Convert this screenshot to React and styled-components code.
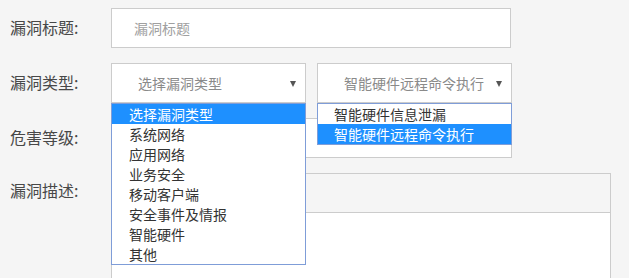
import React from 'react'
import styled, { createGlobalStyle } from 'styled-components'

const GlobalStyle = createGlobalStyle`
  body {
    margin: 0;
    background: #f5f5f5;
    font-family: "Noto Sans CJK SC", "Liberation Sans", sans-serif;
  }
`

const Form = styled.div`
  padding: 8px 0 0 10px;
`
const Row = styled.div`
  display: flex;
  align-items: flex-start;
  margin-bottom: 15px;
`
const Label = styled.div`
  width: 101px;
  flex-shrink: 0;
  line-height: ${p => p.$lh || 38}px;
  font-size: 16px;
  color: #484848;
`
const TextInput = styled.div`
  width: 400px;
  height: 40px;
  box-sizing: border-box;
  border: 1px solid #ccc;
  background: #fff;
  padding-left: 22px;
  line-height: 38px;
  font-size: 14px;
  color: #a0a0a0;
`
const SelectGroup = styled.div`
  display: flex;
  gap: 11px;
`
const Select = styled.div`
  position: relative;
  width: ${p => p.$w}px;
  height: 40px;
  box-sizing: border-box;
  border: 1px solid #ccc;
  background: #fff;
  padding-left: 26px;
  line-height: 38px;
  font-size: 14px;
  color: #8a8a8a;
`
const Arrow = styled.span`
  position: absolute;
  right: 9px;
  top: 17px;
  width: 0;
  height: 0;
  border-left: 3.5px solid transparent;
  border-right: 3.5px solid transparent;
  border-top: 6px solid #555;
`
const Dropdown = styled.ul`
  position: absolute;
  z-index: 10;
  top: calc(100% + 1px);
  left: -1px;
  width: ${p => p.$w}px;
  box-sizing: border-box;
  margin: 0;
  padding: 0;
  list-style: none;
  border: 1px solid #7f9dd8;
  background: #fff;
`
const Option = styled.li`
  height: 20px;
  line-height: 20px;
  padding-left: ${p => p.$pad}px;
  font-size: 14px;
  color: ${p => (p.$active ? '#fff' : '#333')};
  background: ${p => (p.$active ? '#1e90ff' : 'transparent')};
  white-space: nowrap;
`
const Editor = styled.div`
  width: 500px;
  box-sizing: border-box;
  border: 1px solid #ccc;
  background: #fff;
`
const Toolbar = styled.div`
  height: 38px;
  background: #f5f5f5;
  border-bottom: 1px solid #ccc;
`
const EditorBody = styled.div`
  height: 200px;
`

const types = ['选择漏洞类型', '系统网络', '应用网络', '业务安全', '移动客户端', '安全事件及情报', '智能硬件', '其他']
const subTypes = ['智能硬件信息泄漏', '智能硬件远程命令执行']

export default function App() {
  return (
    <>
      <GlobalStyle />
      <Form>
        <Row>
          <Label>漏洞标题:</Label>
          <TextInput>漏洞标题</TextInput>
        </Row>
        <Row>
          <Label>漏洞类型:</Label>
          <SelectGroup>
            <Select $w={195}>
              选择漏洞类型
              <Arrow />
              <Dropdown $w={195}>
                {types.map((t, i) => (
                  <Option key={t} $pad={17} $active={i === 0}>{t}</Option>
                ))}
              </Dropdown>
            </Select>
            <Select $w={195}>
              智能硬件远程命令执行
              <Arrow />
              <Dropdown $w={195}>
                {subTypes.map((t, i) => (
                  <Option key={t} $pad={16} $active={i === 1}>{t}</Option>
                ))}
              </Dropdown>
            </Select>
          </SelectGroup>
        </Row>
        <Row>
          <Label>危害等级:</Label>
          <Select $w={401}>
            <Arrow />
          </Select>
        </Row>
        <Row>
          <Label $lh={34}>漏洞描述:</Label>
          <Editor>
            <Toolbar />
            <EditorBody />
          </Editor>
        </Row>
      </Form>
    </>
  )
}
